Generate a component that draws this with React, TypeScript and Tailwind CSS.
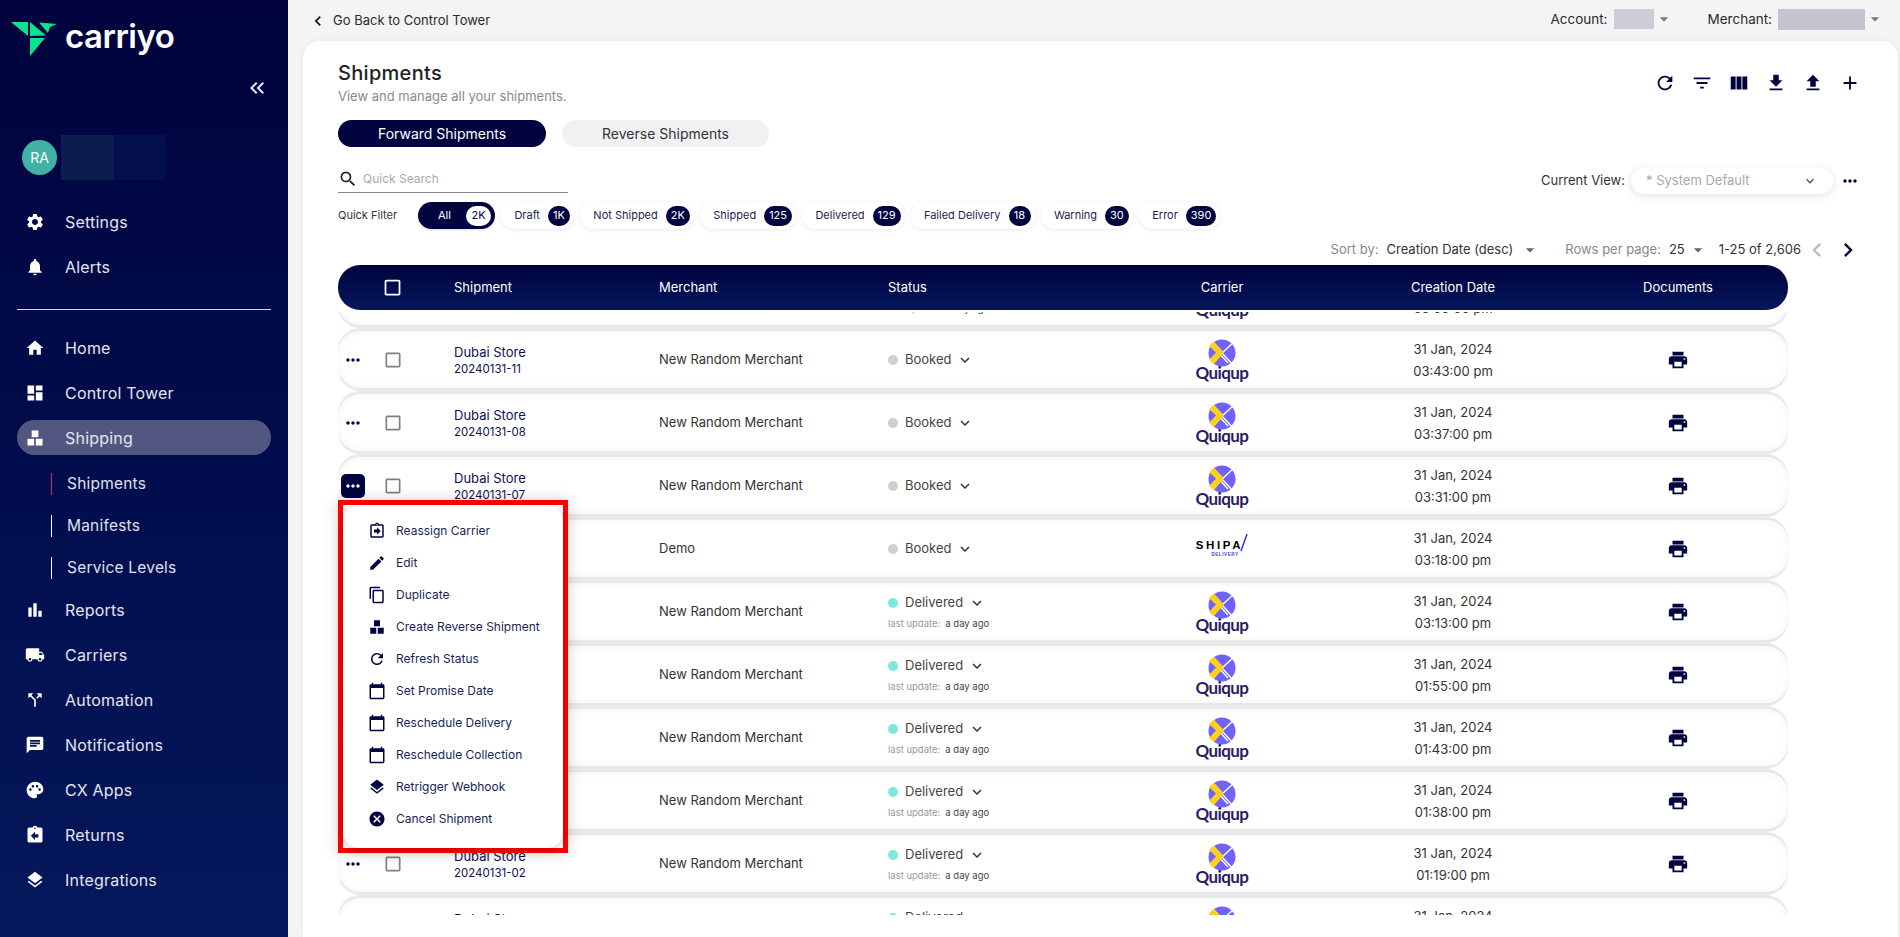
import React from 'react';
import {
  MdSettings, MdNotifications, MdHome, MdDashboard, MdBarChart, MdLocalShipping,
  MdCallSplit, MdChat, MdPalette, MdAssignmentReturn, MdLayers, MdKeyboardDoubleArrowLeft,
  MdChevronLeft, MdChevronRight, MdArrowDropDown, MdRefresh, MdFilterList, MdViewColumn,
  MdFileDownload, MdFileUpload, MdAdd, MdSearch, MdMoreHoriz, MdKeyboardArrowDown,
  MdCheckBoxOutlineBlank, MdPrint, MdOutlineAssignmentReturn, MdEdit, MdContentCopy,
  MdCalendarToday, MdCancel,
} from 'react-icons/md';

const gridCols = 'grid grid-cols-[116px_205px_229px_234px_200px_262px_188px_16px] items-center';

// material "workspaces" in its square form, react-icons only has the round one
function BoxesIcon({ className }: any) {
  return (
    <svg viewBox="0 0 24 24" fill="currentColor" className={className}>
      <rect x="8" y="3" width="8" height="8" />
      <rect x="3" y="13" width="8" height="8" />
      <rect x="13" y="13" width="8" height="8" />
    </svg>
  );
}

function NavItem({ icon: Icon, label, active, className }: any) {
  return (
    <div className={`mx-[17px] h-[35px] flex items-center pl-[8px] rounded-full ${active ? 'bg-[#525782]' : ''} ${className || ''}`}>
      <Icon className="w-[20px] h-[20px] text-white shrink-0" />
      <span className="ml-[20px] text-[16px] text-[#e4e5ef] tracking-[0.2px]">{label}</span>
    </div>
  );
}

function SubItem({ label, active }: any) {
  return (
    <div className={`h-[22px] mb-[20px] flex items-center ml-[51px] pl-[15px] border-l ${active ? 'border-[#e0245e]' : 'border-white'}`}>
      <span className="text-[15.5px] text-[#dfe0ec] tracking-[0.2px]">{label}</span>
    </div>
  );
}

function Sidebar() {
  return (
    <aside className="w-[288px] shrink-0 h-full bg-gradient-to-b from-[#00033d] to-[#05185c] flex flex-col">
      <div className="flex items-center pt-[15px] pl-[5px]">
        <svg width="60" height="50" viewBox="0 0 60 50" className="shrink-0">
          <polygon points="6,7 23,7 23,21" fill="#0be38f" />
          <polygon points="25,7 41,20.5 25,21" fill="#0be38f" />
          <polygon points="34,7.5 52,9 45,12 43,18" fill="#0be38f" />
          <polygon points="25,23 40,23 25,41" fill="#0be38f" />
        </svg>
        <span className="text-white text-[33px] font-semibold font-['Inter',sans-serif] leading-none -mt-[8px] tracking-[-0.5px]">carriyo</span>
      </div>
      <div className="flex justify-end pr-[19px] mt-[11px] h-[24px]">
        <MdKeyboardDoubleArrowLeft className="w-[24px] h-[24px] text-[#e8e8f0]" />
      </div>
      <div className="flex items-center mt-[35px] ml-[22px]">
        <div className="w-[35px] h-[35px] rounded-full bg-[#3fb2a5] text-white text-[14px] flex items-center justify-center">RA</div>
        <div className="ml-[4px] w-[53px] h-[45px] bg-[#0b1d4f]" />
        <div className="w-[52px] h-[45px] bg-[#030f4c]" />
      </div>
      <div className="mt-[24px] flex flex-col gap-[10px]">
        <NavItem icon={MdSettings} label="Settings" />
        <NavItem icon={MdNotifications} label="Alerts" />
      </div>
      <div className="mx-[17px] mt-[25px] border-t border-[#d8d8e0]" />
      <div className="mt-[20px] flex flex-col gap-[10px]">
        <NavItem icon={MdHome} label="Home" />
        <NavItem icon={MdDashboard} label="Control Tower" />
        <NavItem icon={BoxesIcon} label="Shipping" active />
      </div>
      <div className="mt-[18px]">
        <SubItem label="Shipments" active />
        <SubItem label="Manifests" />
        <SubItem label="Service Levels" />
      </div>
      <div className="flex flex-col gap-[10px] -mt-[7px]">
        <NavItem icon={MdBarChart} label="Reports" />
        <NavItem icon={MdLocalShipping} label="Carriers" />
        <NavItem icon={MdCallSplit} label="Automation" />
        <NavItem icon={MdChat} label="Notifications" />
        <NavItem icon={MdPalette} label="CX Apps" />
        <NavItem icon={MdAssignmentReturn} label="Returns" />
        <NavItem icon={MdLayers} label="Integrations" />
      </div>
    </aside>
  );
}

function TopBar() {
  return (
    <div className="h-[41px] shrink-0 flex items-center justify-between pl-[20px] pr-[15px] text-[13.5px] text-[#2a2a2a]">
      <div className="flex items-center gap-[5px]">
        <MdChevronLeft className="w-[20px] h-[20px] text-[#111]" />
        <span className="text-[13px]">Go Back to Control Tower</span>
      </div>
      <div className="flex items-center -mt-[3px]">
        <span>Account:</span>
        <div className="ml-[6px] w-[40px] h-[20px] bg-[#cdcdd9]" />
        <MdArrowDropDown className="w-[20px] h-[20px] text-[#777]" />
        <span className="ml-[34px]">Merchant:</span>
        <div className="ml-[6px] w-[87px] h-[21px] bg-[#c4c4d0]" />
        <MdArrowDropDown className="w-[20px] h-[20px] text-[#777]" />
      </div>
    </div>
  );
}

function Chip({ label, count, active }: any) {
  if (active) {
    return (
      <div className="h-[27px] w-[77px] rounded-full bg-[#02043f] flex items-center justify-between pl-[20px] pr-[4px] text-white text-[11px] shadow-sm">
        <span>{label}</span>
        <span className="h-[20px] min-w-[25px] px-[5px] rounded-full bg-white text-[#02043f] flex items-center justify-center">{count}</span>
      </div>
    );
  }
  return (
    <div className="h-[27px] rounded-full bg-white flex items-center gap-[8px] pl-[13px] pr-[4px] text-[11px] text-[#1f2352] shadow-[0_1px_5px_rgba(0,0,0,0.08)]">
      <span>{label}</span>
      <span className="h-[20px] min-w-[22px] px-[5px] rounded-full bg-[#02043f] text-white flex items-center justify-center">{count}</span>
    </div>
  );
}

function Quiqup() {
  return (
    <div className="flex flex-col items-center">
      <svg width="28" height="28" viewBox="0 0 28 28">
        <circle cx="14" cy="14" r="13.5" fill="#6f63fb" />
        <path d="M26 3 L14 14 L26 27 M20 24 L10 13" stroke="#fff" strokeWidth="1.4" fill="none" />
        <polygon points="1,7 6,2.5 16,13.5 6,25 1,21 8,13.5" fill="#ffd11a" />
      </svg>
      <span className="font-['Lato',sans-serif] font-bold text-[17px] leading-[14px] tracking-[-0.6px] text-[#2c1a63] -mt-[1px]">Quiqup</span>
    </div>
  );
}

function Shipa() {
  return (
    <div className="relative flex flex-col items-center -mt-[2px]">
      <div className="flex items-center">
        <span className="font-['Liberation_Sans',sans-serif] font-bold text-[11.5px] leading-[12px] tracking-[2.6px] text-black">SHIPA</span>
        <svg width="8" height="18" viewBox="0 0 8 18" className="-ml-[3px] -mt-[4px]">
          <line x1="7" y1="0" x2="1" y2="17" stroke="#1a1ae6" strokeWidth="1.3" />
        </svg>
      </div>
      <span className="font-['Liberation_Sans',sans-serif] font-bold text-[4.5px] leading-[5px] tracking-[0.6px] text-[#3a3af0] ml-[6px]">DELIVERY</span>
    </div>
  );
}

function Row({ store, id, merchant, status, carrier, time, menuOpen }: any) {
  const delivered = status === 'Delivered';
  return (
    <div className={`${gridCols} h-[57px] w-[1450px] shrink-0 bg-white rounded-[22px] shadow-[0_3px_1px_#e8e8e8,0_-3px_1px_#e8e8e8,inset_0_0_8px_#f4f4f4]`}>
      <div className="flex items-center">
        <div className={`ml-[3px] w-[24px] h-[24px] rounded-[5px] flex items-center justify-center ${menuOpen ? 'bg-[#02043f] text-white' : 'text-[#02043f]'}`}>
          <MdMoreHoriz className="w-[20px] h-[20px]" />
        </div>
        <MdCheckBoxOutlineBlank className="ml-[18px] w-[20px] h-[20px] text-[#808080]" />
      </div>
      <div className="flex flex-col">
        <span className="text-[13px] leading-[18px] text-[#0d1150]">{store}</span>
        <span className="text-[11.5px] leading-[16px] text-[#0d1150]">{id}</span>
      </div>
      <div className="text-[13px] text-[#333]">{merchant}</div>
      <div className={`flex flex-col ${delivered ? 'mt-[4px]' : ''}`}>
        <div className="flex items-center h-[16px]">
          <span className={`w-[10px] h-[10px] rounded-full ${delivered ? 'bg-[#7ee8dc]' : 'bg-[#cfcfcf]'}`} />
          <span className="ml-[7px] text-[13px] text-[#444]">{status}</span>
          <MdKeyboardArrowDown className="ml-[5px] w-[18px] h-[18px] text-[#333]" />
        </div>
        {delivered && (
          <div className="mt-[6px] h-[16px] flex items-center text-[9.5px] gap-[5px]">
            <span className="text-[#999]">last update:</span>
            <span className="text-[#444]">a day ago</span>
          </div>
        )}
      </div>
      <div className="flex justify-center">{carrier === 'shipa' ? <Shipa /> : <Quiqup />}</div>
      <div className="flex flex-col items-center text-[13px] leading-[22px] text-[#333]">
        <span>31 Jan, 2024</span>
        <span>{time}</span>
      </div>
      <div className="flex justify-center">
        <MdPrint className="w-[22px] h-[22px] text-[#02043f]" />
      </div>
      <div />
    </div>
  );
}

const rows = [
  { id: '20240131-12', merchant: 'New Random Merchant', status: 'Delivered', carrier: 'quiqup', time: '03:50:00 pm' },
  { id: '20240131-11', merchant: 'New Random Merchant', status: 'Booked', carrier: 'quiqup', time: '03:43:00 pm' },
  { id: '20240131-08', merchant: 'New Random Merchant', status: 'Booked', carrier: 'quiqup', time: '03:37:00 pm' },
  { id: '20240131-07', merchant: 'New Random Merchant', status: 'Booked', carrier: 'quiqup', time: '03:31:00 pm', menuOpen: true },
  { id: '20240131-06', merchant: 'Demo', status: 'Booked', carrier: 'shipa', time: '03:18:00 pm' },
  { id: '20240131-05', merchant: 'New Random Merchant', status: 'Delivered', carrier: 'quiqup', time: '03:13:00 pm' },
  { id: '20240131-04', merchant: 'New Random Merchant', status: 'Delivered', carrier: 'quiqup', time: '01:55:00 pm' },
  { id: '20240131-03', merchant: 'New Random Merchant', status: 'Delivered', carrier: 'quiqup', time: '01:43:00 pm' },
  { id: '20240131-03', merchant: 'New Random Merchant', status: 'Delivered', carrier: 'quiqup', time: '01:38:00 pm' },
  { id: '20240131-02', merchant: 'New Random Merchant', status: 'Delivered', carrier: 'quiqup', time: '01:19:00 pm' },
  { id: '20240131-01', merchant: 'New Random Merchant', status: 'Delivered', carrier: 'quiqup', time: '01:10:00 pm' },
];

const menuItems = [
  { icon: MdOutlineAssignmentReturn, label: 'Reassign Carrier', flip: true },
  { icon: MdEdit, label: 'Edit' },
  { icon: MdContentCopy, label: 'Duplicate' },
  { icon: BoxesIcon, label: 'Create Reverse Shipment' },
  { icon: MdRefresh, label: 'Refresh Status' },
  { icon: MdCalendarToday, label: 'Set Promise Date' },
  { icon: MdCalendarToday, label: 'Reschedule Delivery' },
  { icon: MdCalendarToday, label: 'Reschedule Collection' },
  { icon: MdLayers, label: 'Retrigger Webhook' },
  { icon: MdCancel, label: 'Cancel Shipment' },
];

function ActionsMenu() {
  return (
    <div className="absolute left-[338px] top-[500px] w-[230px] h-[353px] border-[5px] border-[#ff0000] z-20 shadow-[0_0_14px_rgba(0,0,0,0.18)]">
      <div className="w-full h-full bg-white rounded-[16px] pt-[10px] shadow-[0_2px_8px_rgba(0,0,0,0.2)]">
        {menuItems.map((m) => (
          <div key={m.label} className="h-[32px] flex items-center pl-[25px]">
            <m.icon className={`w-[18px] h-[18px] text-[#02043f] shrink-0 ${m.flip ? '-scale-x-100' : ''}`} />
            <span className="ml-[10px] text-[12px] text-[#1a1f52] whitespace-nowrap">{m.label}</span>
          </div>
        ))}
      </div>
    </div>
  );
}

function ShipmentsCard() {
  return (
    <div className="flex-1 min-h-0 ml-[15px] mr-[2px] bg-white rounded-t-[16px] shadow-[0_0_6px_rgba(0,0,0,0.06)] flex flex-col pt-[20px]">
      <div className="pl-[35px] pr-[37px] flex items-center justify-between h-[43px]">
        <div>
          <div className="text-[20px] leading-[24px] font-medium text-[#222] tracking-[0.3px]">Shipments</div>
          <div className="mt-[3px] text-[13px] leading-[16px] text-[#8a8a8a]">View and manage all your shipments.</div>
        </div>
        <div className="flex items-center gap-[15px] text-[#02043f]">
          <MdRefresh className="w-[22px] h-[22px]" />
          <MdFilterList className="w-[22px] h-[22px]" />
          <MdViewColumn className="w-[22px] h-[22px]" />
          <MdFileDownload className="w-[22px] h-[22px]" />
          <MdFileUpload className="w-[22px] h-[22px]" />
          <MdAdd className="w-[22px] h-[22px]" />
        </div>
      </div>
      <div className="pl-[35px] mt-[16px] flex gap-[16px]">
        <div className="w-[208px] h-[27px] rounded-full bg-[#02043f] text-white text-[14px] flex items-center justify-center">Forward Shipments</div>
        <div className="w-[207px] h-[27px] rounded-full bg-[#f1f1f4] text-[#333] text-[14px] flex items-center justify-center">Reverse Shipments</div>
      </div>
      <div className="pl-[35px] pr-[38px] mt-[19px] flex items-center justify-between h-[27px]">
        <div className="w-[230px] h-[27px] border-b border-[#888] flex items-center">
          <MdSearch className="w-[20px] h-[20px] text-[#222]" />
          <span className="ml-[5px] text-[12px] text-[#aaa]">Quick Search</span>
        </div>
        <div className="flex items-center mt-[2px]">
          <span className="text-[13px] text-[#333]">Current View:</span>
          <div className="ml-[6px] w-[202px] h-[26px] rounded-full bg-white shadow-[0_2px_8px_rgba(0,0,0,0.12)] flex items-center justify-between pl-[15px] pr-[15px]">
            <span className="text-[13px] text-[#aaa]">* System Default</span>
            <MdKeyboardArrowDown className="w-[16px] h-[16px] text-[#555]" />
          </div>
          <MdMoreHoriz className="ml-[7px] w-[20px] h-[20px] text-[#02043f]" />
        </div>
      </div>
      <div className="pl-[35px] mt-[9px] flex items-center h-[27px]">
        <span className="w-[80px] text-[11px] text-[#333]">Quick Filter</span>
        <div className="flex gap-[6.4px]">
          <Chip label="All" count="2K" active />
          <Chip label="Draft" count="1K" />
          <Chip label="Not Shipped" count="2K" />
          <Chip label="Shipped" count="125" />
          <Chip label="Delivered" count="129" />
          <Chip label="Failed Delivery" count="18" />
          <Chip label="Warning" count="30" />
          <Chip label="Error" count="390" />
        </div>
      </div>
      <div className="pr-[36px] mt-[10px] h-[22px] flex items-center justify-end text-[13px] text-[#333]">
        <span className="text-[#888]">Sort by:</span>
        <span className="ml-[8px]">Creation Date (desc)</span>
        <MdArrowDropDown className="ml-[7px] w-[20px] h-[20px] text-[#666]" />
        <span className="ml-[25px] text-[#888]">Rows per page:</span>
        <span className="ml-[8px]">25</span>
        <MdArrowDropDown className="ml-[3px] w-[20px] h-[20px] text-[#666]" />
        <span className="ml-[11px]">1-25 of 2,606</span>
        <MdChevronLeft className="ml-[2px] w-[28px] h-[28px] text-[#bbb]" />
        <MdChevronRight className="ml-[3px] w-[28px] h-[28px] text-[#02043f]" />
      </div>
      <div className="pl-[35px] mt-[4px] relative z-10">
        <div className={`${gridCols} w-[1450px] h-[45px] rounded-[22px] bg-gradient-to-b from-[#01043f] to-[#05175c] text-white text-[13px]`}>
          <div className="flex">
            <MdCheckBoxOutlineBlank className="ml-[44px] w-[21px] h-[21px] text-white" />
          </div>
          <div>Shipment</div>
          <div>Merchant</div>
          <div>Status</div>
          <div className="text-center">Carrier</div>
          <div className="text-center">Creation Date</div>
          <div className="text-center">Documents</div>
          <div />
        </div>
      </div>
      <div className="mt-[2px] h-[603px] overflow-hidden pl-[35px]">
        <div className="-mt-[44px] flex flex-col gap-[6px]">
          {rows.map((r, i) => (
            <Row key={i} store="Dubai Store" {...r} />
          ))}
        </div>
      </div>
    </div>
  );
}

export default function App() {
  return (
    <div className="relative flex w-[1900px] h-[937px] overflow-hidden bg-[#f4f4f4] font-['Inter',sans-serif]">
      <Sidebar />
      <div className="flex-1 min-w-0 flex flex-col">
        <TopBar />
        <ShipmentsCard />
      </div>
      <ActionsMenu />
    </div>
  );
}
